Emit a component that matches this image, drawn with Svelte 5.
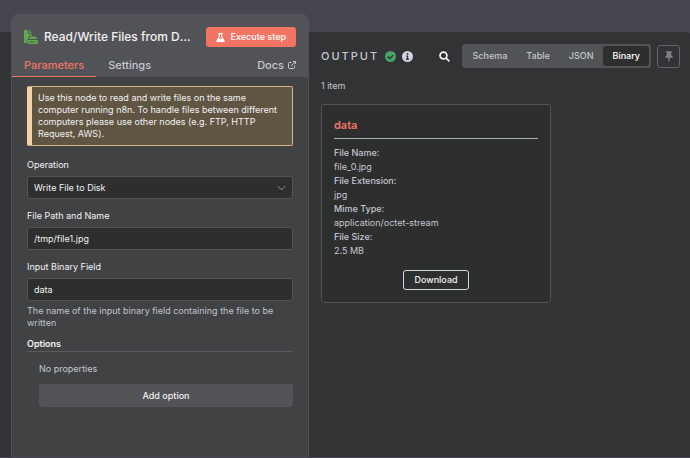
<script>
  const tabs = ['Schema', 'Table', 'JSON', 'Binary'];

  let activeTab = $state('Parameters');
  let displayMode = $state('Binary');
  let operation = $state('Write File to Disk');
  let filePath = $state('/tmp/file1.jpg');
  let binaryField = $state('data');

  const file = [
    ['File Name:', 'file_0.jpg'],
    ['File Extension:', 'jpg'],
    ['Mime Type:', 'application/octet-stream'],
    ['File Size:', '2.5 MB'],
  ];
</script>

<div class="ndv">
  <div class="input-edge"></div>

  <section class="node-panel">
    <header class="node-header">
      <div class="title-row">
        <svg class="node-icon" viewBox="0 0 28 28" aria-hidden="true">
          <path fill="#5fa850" d="M0 1q0-1 1-1h7v8h8v3h-4l-5 7v8H1q-1 0-1-1zM10 0l6 6h-6z" />
          <path fill="#5fa850" d="M13 13h10l4 5H9zM9 20h18q1 0 1 1v6q0 1-1 1H9q-1 0-1-1v-6q0-1 1-1z" />
          <path stroke="#525356" stroke-width="2" d="M11 24h8M21 24h1.500M24 24h1.500" />
        </svg>
        <h1>Read/Write Files from Disk</h1>
        <button class="execute" type="button">
          <svg viewBox="0 0 16 16" aria-hidden="true">
            <path fill="currentColor" d="M4 0h8v2h-1v4l4.500 8q.6 2-1.500 2H2Q-.1 16 .5 14L5 6V2H4zM7 2v4.500L5 10h6L9 6.500V2z" />
          </svg>
          Execute step
        </button>
      </div>
      <nav class="tabs">
        <button type="button" class:active={activeTab === 'Parameters'} onclick={() => (activeTab = 'Parameters')}>Parameters</button>
        <button type="button" class:active={activeTab === 'Settings'} onclick={() => (activeTab = 'Settings')}>Settings</button>
        <a href="#docs">
          Docs
          <svg viewBox="0 0 16 16" fill="none" stroke="currentColor" stroke-width="2" aria-hidden="true">
            <path d="M7 3H3Q1 3 1 5v8q0 2 2 2h8q2 0 2-2V9M6 10l8-8M10 1h5v5" />
          </svg>
        </a>
      </nav>
    </header>

    <div class="node-body">
      <p class="notice">
        Use this node to read and write files on the same computer running n8n. To handle files between different
        computers please use other nodes (e.g. FTP, HTTP Request, AWS).
      </p>

      <div class="field">
        <label for="operation">Operation</label>
        <div class="select-wrap">
          <select id="operation" bind:value={operation}>
            <option>Read File(s) From Disk</option>
            <option>Write File to Disk</option>
          </select>
          <svg viewBox="0 0 10 6" fill="none" stroke="#a3a5ad" aria-hidden="true"><path d="M1 1l4 4 4-4" /></svg>
        </div>
      </div>

      <div class="field">
        <label for="path">File Path and Name</label>
        <input id="path" type="text" bind:value={filePath} />
      </div>

      <div class="field">
        <label for="binary">Input Binary Field</label>
        <input id="binary" type="text" bind:value={binaryField} />
        <p class="hint">The name of the input binary field containing the file to be written</p>
      </div>

      <h2>Options</h2>
      <div class="options">
        <p>No properties</p>
        <button type="button">Add option</button>
      </div>
    </div>
  </section>

  <section class="output">
    <header class="output-header">
      <h2>OUTPUT</h2>
      <svg class="status" viewBox="0 0 16 16" aria-hidden="true">
        <circle cx="8" cy="8" r="8" fill="#45a56b" />
        <path d="M4 8l3 3 5-5" fill="none" stroke="#2d2e2e" stroke-width="2" />
      </svg>
      <svg class="status" viewBox="0 0 16 16" aria-hidden="true">
        <circle cx="8" cy="8" r="8" fill="#cfd2e0" />
        <path fill="#323335" d="M7 3h2v2.500H7zM6 6.500h3V11h1v2H6v-2h1V8H6z" />
      </svg>
      <button class="search" type="button" aria-label="Search">
        <svg viewBox="0 0 16 16" fill="none" stroke="currentColor" stroke-width="2.500" aria-hidden="true">
          <circle cx="6.500" cy="6.500" r="5" /><path d="M10 10l5 5" />
        </svg>
      </button>
      <div class="modes">
        {#each tabs as tab}
          <button type="button" class:active={displayMode === tab} onclick={() => (displayMode = tab)}>{tab}</button>
        {/each}
      </div>
      <button class="pin" type="button" aria-label="Pin data">
        <svg viewBox="0 0 12 16" aria-hidden="true">
          <path fill="currentColor" d="M2 0h8q1 0 1 1t-1 1H9l.5 4Q12 7.500 12 10H7v5l-1 1-1-1v-5H0q0-2.500 2.500-4L3 2H2Q1 2 1 1t1-1z" />
        </svg>
      </button>
    </header>

    <p class="count">1 item</p>

    <article class="card">
      <h3>data</h3>
      <dl>
        {#each file as [label, value]}
          <dt>{label}</dt>
          <dd>{value}</dd>
        {/each}
      </dl>
      <button class="download" type="button">Download</button>
    </article>
  </section>
</div>

<style>
  :global(body) {
    margin: 0;
    background: #47464f;
  }

  .ndv {
    display: grid;
    grid-template-columns: 11px 298px minmax(0, 1fr);
    min-height: 100vh;
    box-sizing: border-box;
    padding-bottom: 1px;
    font-family: Inter, 'Open Sans', sans-serif;
    font-size: 9px;
    line-height: 14px;
    color: #f2f2f4;
  }

  h1, h2, h3, p, dl, dd {
    margin: 0;
  }

  button, input, select {
    box-sizing: border-box;
    margin: 0;
    font: inherit;
    color: inherit;
  }

  button {
    padding: 0;
    border: 0;
    background: none;
    cursor: pointer;
  }

  svg {
    display: block;
    flex: none;
  }

  .input-edge {
    margin-top: 32px;
    background: #323335;
  }

  /* node settings */
  .node-panel {
    display: flex;
    flex-direction: column;
    margin-top: 14px;
    border: solid #525356;
    border-width: 0 1px;
    border-radius: 6px 6px 0 0;
    background: #414244;
    overflow: hidden;
  }

  .node-header {
    background: #525356;
  }

  .title-row {
    display: flex;
    align-items: center;
    padding: 13px 12px 0;
  }

  .node-icon {
    width: 14px;
    height: 14px;
    margin-right: 6px;
  }

  h1 {
    flex: 1;
    min-width: 0;
    overflow: hidden;
    text-overflow: ellipsis;
    white-space: nowrap;
    font-size: 12px;
    line-height: 16px;
    font-weight: 500;
  }

  .execute {
    display: flex;
    align-items: center;
    gap: 6px;
    height: 20px;
    margin-left: 14px;
    padding: 0 10px;
    border-radius: 3px;
    background: #f27563;
    color: #fff;
    font-weight: 500;
  }

  .execute svg {
    width: 9px;
    height: 9px;
  }

  .tabs {
    display: flex;
    margin-top: 7px;
    padding-right: 12px;
    font-size: 11px;
    font-weight: 500;
    color: #c5c7d3;
  }

  .tabs button {
    height: 23px;
    padding: 0 12px;
    border-bottom: 1px solid transparent;
  }

  .tabs .active {
    border-color: #f27563;
    color: #f27563;
  }

  .tabs a {
    display: flex;
    align-items: center;
    gap: 4px;
    height: 22px;
    margin-left: auto;
    color: inherit;
    text-decoration: none;
  }

  .tabs svg {
    width: 8px;
    height: 8px;
  }

  .node-body {
    flex: 1;
    padding: 9px 15px 16px;
  }

  .notice {
    margin-bottom: 12px;
    padding: 5px 6px;
    border: 1px solid #d6b98f;
    border-left: 5px solid #f3d3a5;
    border-radius: 2px;
    background: #605543;
    line-height: 12px;
  }

  .field {
    display: grid;
    gap: 4px;
    margin-bottom: 10px;
  }

  .field:last-of-type,
  .field:has(.hint) {
    margin-bottom: 8px;
  }

  .field input,
  .field select {
    width: 100%;
    height: 23px;
    padding: 0 6px;
    border: 1px solid #525356;
    border-radius: 3px;
    background: #2d2e2e;
    appearance: none;
  }

  .select-wrap {
    position: relative;
  }

  .select-wrap svg {
    position: absolute;
    top: 9px;
    right: 7px;
    width: 9px;
    height: 6px;
    pointer-events: none;
  }

  .hint {
    line-height: 12px;
    color: #c0c2ce;
  }

  .node-body h2 {
    border-bottom: 1px solid #5a5b5e;
    font-size: 9px;
    font-weight: 600;
  }

  .options {
    padding: 10px 0 0 12px;
    color: #c5c7d3;
  }

  .options button {
    width: 100%;
    height: 23px;
    margin-top: 8px;
    border-radius: 3px;
    background: #525356;
    color: #f2f2f4;
    font-weight: 500;
  }

  /* output */
  .output {
    margin-top: 32px;
    padding: 12px 10px 16px 12px;
    border-radius: 0 3px 0 0;
    background: #323335;
    color: #c5c7d3;
  }

  .output-header {
    display: flex;
    align-items: center;
  }

  .output h2 {
    margin-right: 6px;
    font-size: 11px;
    font-weight: 500;
    letter-spacing: 2px;
  }

  .status {
    width: 11px;
    height: 11px;
    margin-right: 6px;
  }

  .search {
    margin: 0 12px 0 auto;
    color: #f2f2f4;
  }

  .search svg {
    width: 11px;
    height: 11px;
  }

  .modes {
    display: flex;
    gap: 1px;
    padding: 2px;
    border-radius: 3px;
    background: #525356;
  }

  .modes button {
    height: 20px;
    padding: 0 9px;
    border-radius: 3px;
    font-weight: 500;
  }

  .modes .active {
    background: #2d2e2e;
    color: #fff;
  }

  .pin {
    display: grid;
    place-items: center;
    width: 23px;
    height: 23px;
    margin-left: 6px;
    border: 1px solid #626367;
    border-radius: 3px;
    color: #808288;
  }

  .pin svg {
    width: 8px;
    height: 11px;
  }

  .count {
    margin-top: 11px;
  }

  .card {
    box-sizing: border-box;
    max-width: 230px;
    margin-top: 11px;
    padding: 12px;
    border: 1px solid #525356;
    border-radius: 3px;
    background: #2d2e2e;
  }

  .card h3 {
    padding-bottom: 5px;
    border-bottom: 1px solid #a9abb3;
    font-size: 11px;
    line-height: 16px;
    font-weight: 600;
    color: #f27563;
  }

  dl {
    padding-top: 7px;
  }

  dt {
    font-weight: 500;
  }

  .download {
    display: block;
    height: 20px;
    margin: 12px auto 0;
    padding: 0 10px;
    border: 1px solid #d5d7e0;
    border-radius: 3px;
    color: #f2f2f4;
    font-weight: 500;
  }
</style>
